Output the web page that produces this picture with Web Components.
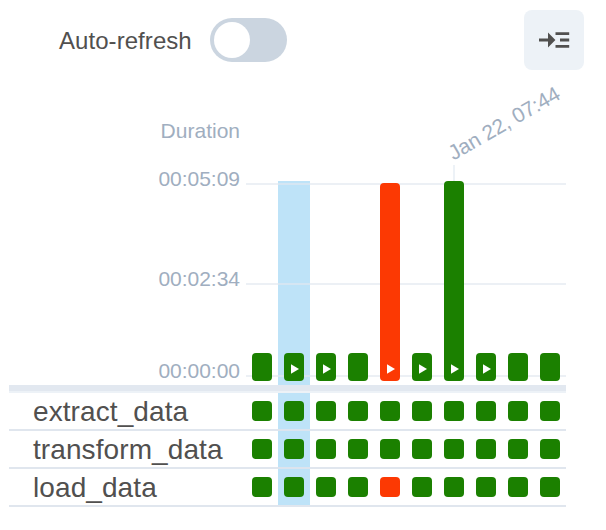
<!DOCTYPE html>
<html lang="en">
<head>
<meta charset="utf-8">
<title>Grid view</title>
<style>
html, body { margin: 0; background: #fff; }
body { width: 606px; height: 530px; overflow: hidden; font-family: "Liberation Sans", Arial, sans-serif; color: #51504f; }
</style>
</head>
<body>
<dag-grid></dag-grid>
<script>
const define = (name, html, setup) => customElements.define(name, class extends HTMLElement {
  connectedCallback() {
    if (this.shadowRoot) return;
    const t = document.createElement('template');
    t.innerHTML = html;
    this.attachShadow({ mode: 'open' }).append(t.content.cloneNode(true));
    if (setup) setup(this, this.shadowRoot);
  }
});

define('toggle-switch', `
<style>
:host { display: flex; align-items: center; gap: 18px; font-size: 24px; line-height: 44px; letter-spacing: 0.06px; }
.track { box-sizing: border-box; width: 77px; height: 44px; padding: 4px; border-radius: 22px; background: #cbd5e0; }
.label { padding: 2px 0 0 1px; height: 42px; line-height: 42px; }
.knob { width: 36px; height: 36px; border-radius: 50%; background: #fff; }
</style>
<div class="label"><slot></slot></div><div class="track"><div class="knob"></div></div>`);

define('panel-button', `
<style>
:host { display: grid; place-items: center; width: 60px; height: 60px; border-radius: 8px; background: #edf2f7; }
svg { display: block; }
</style>
<svg width="60" height="60" viewBox="0 0 60 60" fill="#51504f">
<path d="M15 28.6h9v-6l7.4 7.4-7.4 7.4v-6h-9zM31.5 22.2h13.7v2.8H31.5zM36 28.6h9.2v2.8H36zM31.5 35h13.7v2.8H31.5z"/>
</svg>`);

define('run-bar', `
<style>
:host { display: flex; flex-direction: column; align-items: center; justify-content: flex-end; width: 32px; }
.bar { display: flex; align-items: flex-end; width: 20px; border-radius: 4px; background: var(--state, #1b8000); }
svg { display: block; margin: 0 0 7px 7px; }
.tick { width: 2px; height: 16px; background: #edf2f7; }
</style>
<div class="bar"></div>`, (host, root) => {
  const bar = root.querySelector('.bar');
  bar.style.height = host.getAttribute('height') + 'px';
  if (host.hasAttribute('manual'))
    bar.innerHTML = '<svg width="9" height="10" viewBox="0 0 9 10"><path d="M0 .2 8 5 0 9.8z" fill="#fff"/></svg>';
  if (host.hasAttribute('tick'))
    bar.insertAdjacentHTML('beforebegin', '<div class="tick"></div>');
});

define('axis-line', `
<style>
:host { display: flex; justify-content: flex-end; height: 2px; }
.tag { width: 120px; margin-right: 6px; height: 26px; margin-top: -17px; line-height: 26px; text-align: right; font-size: 21px; color: #a0aec0; letter-spacing: -.02px; }
.line { width: 320px; height: 2px; background: rgba(226,232,240,.65); }
</style>
<div class="tag"><slot></slot></div><div class="line"></div>`);

define('duration-chart', `
<style>
:host { display: grid; width: 557px; height: 220px; }
.axis, .bars { grid-area: 1 / 1; }
.axis { display: flex; flex-direction: column; padding-top: 18px; }
.axis axis-line + axis-line { margin-top: 98px; }
.axis axis-line:last-child { margin-top: 90px; }
.bars { display: flex; justify-content: flex-end; height: 216px; z-index: 1; }
</style>
<div class="axis"><axis-line>00:05:09</axis-line><axis-line>00:02:34</axis-line><axis-line>00:00:00</axis-line></div>
<div class="bars">
<run-bar height="28"></run-bar><run-bar height="28" manual></run-bar><run-bar height="28" manual></run-bar><run-bar height="28"></run-bar>
<run-bar height="198" manual style="--state:#fc3903"></run-bar><run-bar height="28" manual></run-bar><run-bar height="200" manual tick></run-bar>
<run-bar height="28" manual></run-bar><run-bar height="28"></run-bar><run-bar height="28"></run-bar>
</div>`);

define('task-row', `
<style>
:host { display: flex; box-sizing: border-box; width: 557px; height: 38px; border-bottom: 2px solid rgba(222,228,237,.93); }
.name { width: 213px; padding-left: 24px; font-size: 28px; line-height: 38px; height: 36px; letter-spacing: .09px; }
.cells { display: flex; gap: 12px; padding: 8px 6px; }
i { width: 20px; height: 20px; border-radius: 4px; background: #1b8000; }
.failed { background: #fc3903; }
</style>
<div class="name"><slot></slot></div><div class="cells"></div>`, (host, root) => {
  const failed = Number(host.getAttribute('failed') || -1);
  const cells = root.querySelector('.cells');
  for (let n = 0; n < 10; n++) {
    const cell = document.createElement('i');
    if (n === failed) cell.className = 'failed';
    cells.append(cell);
  }
});

define('dag-grid', `
<style>
:host { display: block; position: relative; width: 606px; height: 530px; }
.top { position: relative; display: flex; justify-content: space-between; align-items: center; padding: 10px 22px 0 58px; }
.heading { width: 240px; padding-top: 48px; height: 47px; text-align: right; font-size: 21px; line-height: 26px; color: #a0aec0; }
.table { position: relative; margin-left: 9px; }
.selected { position: absolute; left: 278px; top: 181px; width: 32px; height: 324px; background: #bee3f8; }
.rule { width: 557px; height: 6px; background: #e2e8f0; border-bottom: 2px solid #edf2f7; }
.date { position: absolute; left: 456px; top: 141px; font-size: 21px; line-height: 24px; letter-spacing: -.18px; white-space: nowrap; color: #a0aec0; transform: rotate(-30deg); transform-origin: 0 100%; }
</style>
<div class="selected"></div>
<div class="top"><toggle-switch>Auto-refresh</toggle-switch><panel-button></panel-button></div>
<div class="heading">Duration</div>
<div class="table">
<duration-chart></duration-chart>
<div class="rule"></div>
<task-row>extract_data</task-row><task-row>transform_data</task-row><task-row failed="4">load_data</task-row>
</div>
<div class="date">Jan 22, 07:44</div>`);
</script>
</body>
</html>
